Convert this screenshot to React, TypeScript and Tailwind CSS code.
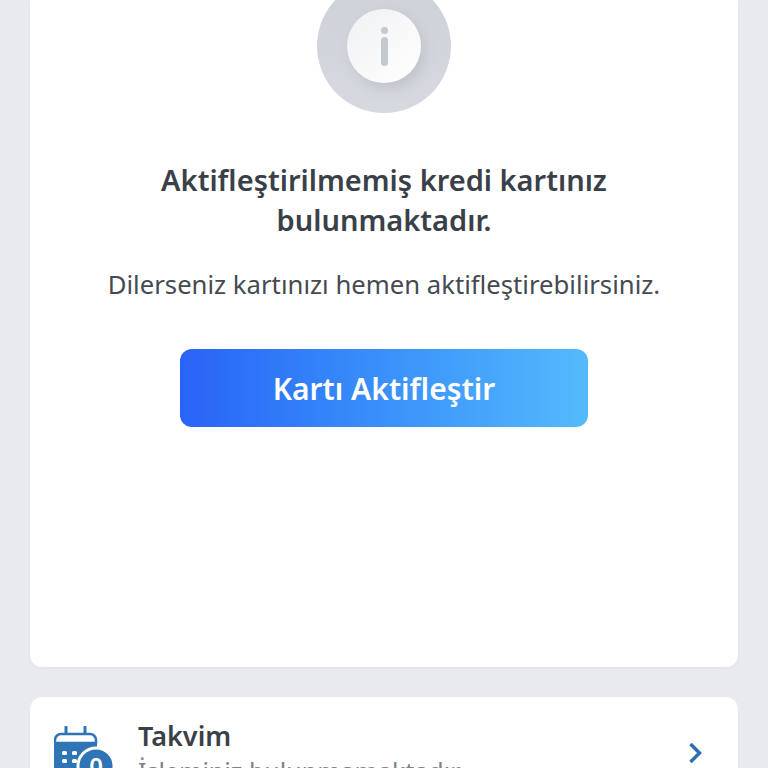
import React from 'react';

const CalendarBadge = () => (
    <svg width="62" height="62" viewBox="0 0 62 62" fill="none">
        <path d="M12 1v9M31 1v9" stroke="#2f74b5" strokeWidth="3" strokeLinecap="round" />
        <path d="M7 8h29a6 6 0 0 1 6 6v3H1v-3a6 6 0 0 1 6-6z" stroke="#2f74b5" strokeWidth="2.5" fill="#fff" />
        <path d="M0 17h43v24a6 6 0 0 1-6 6H6a6 6 0 0 1-6-6z" fill="#2f74b5" />
        <g fill="#fff">
            <rect x="8" y="25" width="5" height="4" rx="1.5" />
            <rect x="18" y="25" width="5" height="4" rx="1.5" />
            <rect x="8" y="33" width="5" height="4" rx="1.5" />
            <rect x="18" y="33" width="5" height="4" rx="1.5" />
        </g>
        <circle cx="42" cy="40" r="18" fill="#2f74b5" stroke="#fff" strokeWidth="3" />
        <text x="42" y="49" textAnchor="middle" fontSize="24" fontWeight="600" fill="#fff">0</text>
    </svg>
);

export default function App() {
    return (
        <div className="h-[768px] w-[768px] overflow-hidden bg-[#e8eaef] px-[30px] font-['Noto_Sans','Open_Sans',sans-serif]">
            {/* Activation card */}
            <div className="flex h-[667px] flex-col items-center overflow-hidden rounded-b-xl bg-white shadow-[0_1px_3px_rgba(0,0,0,0.03)]">
                <div className="-mt-[21px] flex h-[134px] w-[134px] shrink-0 items-center justify-center rounded-full bg-gradient-to-b from-[#cdd1d8] to-[#d6d9df]">
                    <div className="flex h-[74px] w-[74px] flex-col items-center justify-center gap-[3px] rounded-full bg-gradient-to-br from-[#f0f1f3] to-white shadow-[4px_6px_12px_rgba(150,155,165,0.3)]">
                        <span className="h-[7px] w-[7px] rounded-full bg-[#c4c8cf]" />
                        <span className="h-[29px] w-[7px] rounded-full bg-[#c4c8cf]" />
                    </div>
                </div>
                <h1 className="mt-[47px] w-[500px] text-center text-[29px] font-semibold leading-[40px] text-[#3a4048]">
                    Aktifleştirilmemiş kredi kartınız bulunmaktadır.
                </h1>
                <p className="mt-[27px] whitespace-nowrap text-[25.7px] leading-[36px] text-[#454a52]">
                    Dilerseniz kartınızı hemen aktifleştirebilirsiniz.
                </p>
                <button className="mt-[46px] h-[78px] w-[408px] rounded-xl bg-gradient-to-r from-[#2a62f6] to-[#55bafc] text-[30px] font-semibold text-white">
                    Kartı Aktifleştir
                </button>
            </div>

            {/* Calendar row */}
            <div className="mt-[30px] flex items-start rounded-t-xl bg-white pl-6 pr-[33px] pt-[29px] shadow-[0_1px_3px_rgba(0,0,0,0.03)]">
                <CalendarBadge />
                <div className="-mt-[7px] ml-[22px] flex-1">
                    <div className="text-[27px] font-semibold leading-[34px] text-[#3a4048]">Takvim</div>
                    <div className="text-[25px] leading-[36px] text-[#7c818a]">İşleminiz bulunmamaktadır.</div>
                </div>
                <svg className="mt-[16px]" width="16" height="22" viewBox="0 0 16 22" fill="none">
                    <path d="M1.5 2l9 9-9 9" stroke="#2f6fb0" strokeWidth="3.5" />
                </svg>
            </div>
        </div>
    );
}
